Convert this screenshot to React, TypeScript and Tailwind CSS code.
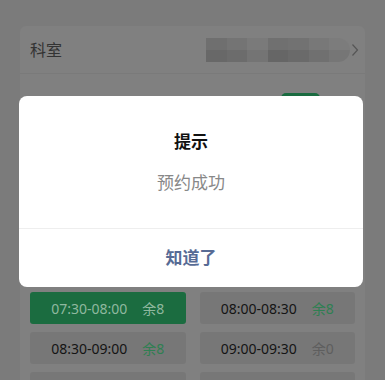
import React from 'react'

const slots = [
  { time: '07:30-08:00', left: 8, active: true },
  { time: '08:00-08:30', left: 8, active: false },
  { time: '08:30-09:00', left: 8, active: false },
  { time: '09:00-09:30', left: 0, active: false },
]

const mosaic = [
  ['#6f6f6f', '#747474', '#7a7a7a', '#707070', '#727272', '#787878', '#7c7c7c'],
  ['#686868', '#6c6c6c', '#747474', '#666666', '#6a6a6a', '#707070', '#767676'],
]

export default function App() {
  return (
    <div
      className="relative w-[385px] h-[380px] overflow-hidden bg-[#7b7b7b]"
      style={{ fontFamily: '"Noto Sans", "Noto Sans CJK SC", sans-serif' }}
    >
      <div className="pt-[26px] px-[20px]">
        <div className="bg-[#808080] rounded-t-[6px]">
          <div className="flex items-center justify-between h-[48px] pl-[10px] pr-[6px] border-b border-[#7a7a7a]">
            <span className="text-[16px] text-[#333333]">科室</span>
            <div className="flex items-center gap-[1px]">
              <div className="flex flex-col w-[144px] h-[24px] overflow-hidden rounded-r-full">
                {mosaic.map((row, i) => (
                  <div key={i} className="flex flex-1">
                    {row.map((c, j) => (
                      <div key={j} className="flex-1" style={{ background: c }} />
                    ))}
                  </div>
                ))}
              </div>
              <svg width="8" height="14" viewBox="0 0 8 14" fill="none" stroke="#555" strokeWidth="1.2">
                <path d="M1.5 1.5 L6.5 7 L1.5 12.5" />
              </svg>
            </div>
          </div>
          <div className="flex justify-end h-[218px] pt-[19px] pr-[45px]">
            <div className="w-[39px] h-[26px] rounded-[5px] bg-[#1a6b40]" />
          </div>
          <div className="grid grid-cols-2 gap-x-[14px] gap-y-[8px] px-[10px] pb-[10px]">
            {slots.map((s) => (
              <div
                key={s.time}
                className={`flex items-center justify-center gap-[15px] h-[32px] rounded-[3px] text-[14px] ${
                  s.active ? 'bg-[#1b6c40] text-[#8fb89f]' : 'bg-[#777777] text-[#141414]'
                }`}
              >
                <span>{s.time}</span>
                <span className={s.active ? '' : s.left > 0 ? 'text-[#2f7f52]' : 'text-[#5e5e5e]'}>
                  余{s.left}
                </span>
              </div>
            ))}
            <div className="h-[32px] rounded-[3px] bg-[#777777]" />
            <div className="h-[32px] rounded-[3px] bg-[#777777]" />
          </div>
        </div>
      </div>

      <div className="absolute left-[19px] top-[96px] w-[344px] h-[191px] bg-white rounded-[8px] flex flex-col overflow-hidden">
        <div className="flex flex-col items-center flex-1 pt-[34px]">
          <div className="text-[17px] font-bold text-[#111111] leading-[24px]">提示</div>
          <div className="mt-[17px] text-[17px] text-[#888888] leading-[24px]">预约成功</div>
        </div>
        <div className="h-[59px] border-t border-[#eeeeee] flex items-center justify-center">
          <span className="text-[17px] font-bold text-[#576b95]">知道了</span>
        </div>
      </div>
    </div>
  )
}
